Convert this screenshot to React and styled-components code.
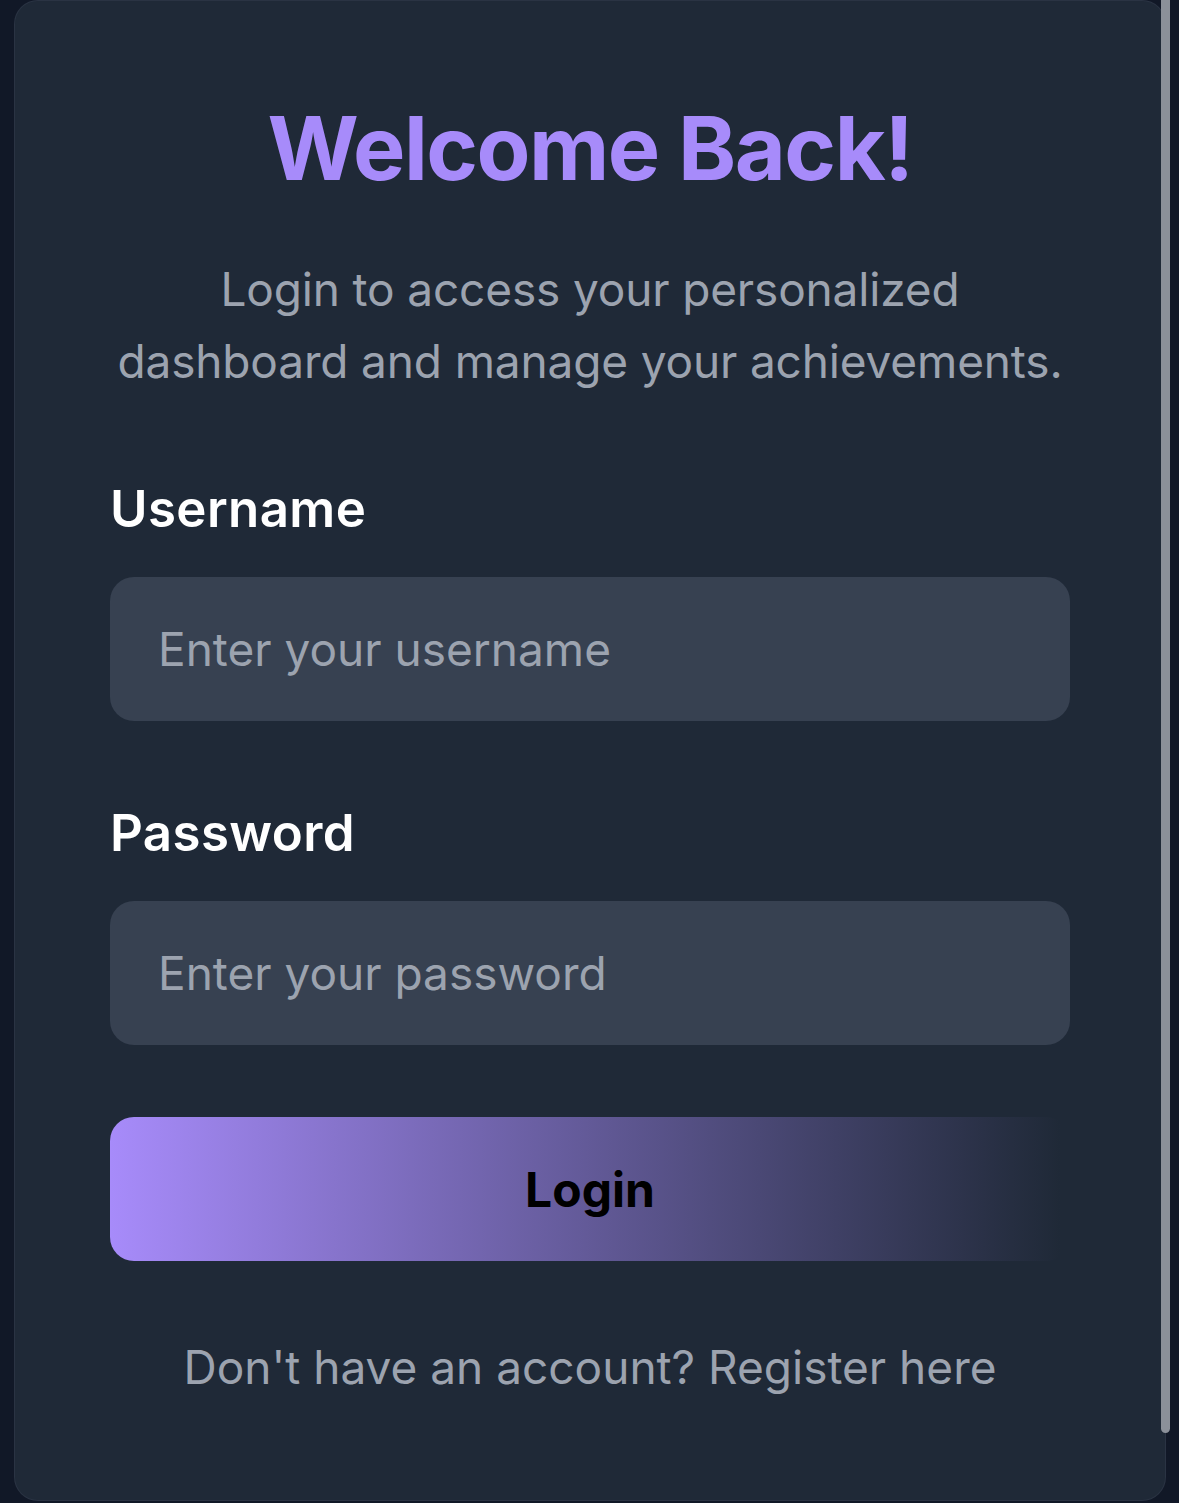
import React from "react";
import styled, { createGlobalStyle } from "styled-components";

const GlobalStyle = createGlobalStyle`
  html, body {
    margin: 0;
    padding: 0;
    background: #111827;
    overflow: hidden;
  }
  * {
    box-sizing: border-box;
  }
`;

const Page = styled.div`
  font-family: Inter, "Noto Sans", "Liberation Sans", sans-serif;
  padding-left: 14px;
  width: 1179px;
  height: 1503px;
`;

const Card = styled.div`
  width: 1152px;
  height: 1501px;
  background: #1f2937;
  border: 1px solid rgba(55, 65, 81, 0.45);
  border-radius: 24px;
  padding: 99px 95px 0;
  display: flex;
  flex-direction: column;
`;

const Title = styled.h1`
  margin: 0;
  font-size: 88px;
  line-height: 97px;
  font-weight: 700;
  color: #a78bfa;
  text-align: center;
  letter-spacing: -1.5px;
`;

const Subtitle = styled.p`
  margin: 56px 0 0;
  font-size: 46px;
  line-height: 72px;
  color: #9ca3af;
  text-align: center;
  white-space: nowrap;
  letter-spacing: -0.15px;
`;

const Form = styled.form`
  margin-top: 76px;
  display: flex;
  flex-direction: column;
`;

const Field = styled.div`
  display: flex;
  flex-direction: column;
  gap: 32px;
  margin-bottom: ${props => (props.last ? "72px" : "76px")};
`;

const Label = styled.label`
  font-size: 51px;
  line-height: 72px;
  font-weight: 600;
  color: #ffffff;
  letter-spacing: 0.4px;
`;

const Input = styled.input`
  height: 144px;
  width: 100%;
  border: none;
  outline: none;
  border-radius: 24px;
  background: #374151;
  padding: 0 48px;
  font-family: inherit;
  font-size: 46px;
  color: #f3f4f6;

  &::placeholder {
    color: #9ca3af;
  }
`;

const Button = styled.button`
  height: 144px;
  width: 100%;
  border: none;
  border-radius: 24px;
  background: linear-gradient(to right, #a78bfa 0%, #1f2937 99%);
  font-family: inherit;
  font-size: 48px;
  font-weight: 700;
  color: #000000;
  cursor: pointer;
`;

const Footer = styled.p`
  margin: 72px 0 0;
  font-size: 46px;
  line-height: 68px;
  color: #9ca3af;
  text-align: center;
`;

const ScrollThumb = styled.div`
  position: fixed;
  top: 0;
  right: 9px;
  width: 9px;
  height: 1433px;
  border-radius: 0 0 5px 5px;
  background: #8b9099;
`;

export default function App() {
  return (
    <Page>
      <GlobalStyle />
      <Card>
        <Title>Welcome Back!</Title>
        <Subtitle>
          Login to access your personalized
          <br />
          dashboard and manage your achievements.
        </Subtitle>
        <Form onSubmit={e => e.preventDefault()}>
          <Field>
            <Label htmlFor="username">Username</Label>
            <Input id="username" type="text" placeholder="Enter your username" />
          </Field>
          <Field last>
            <Label htmlFor="password">Password</Label>
            <Input id="password" type="password" placeholder="Enter your password" />
          </Field>
          <Button type="submit">Login</Button>
        </Form>
        <Footer>Don't have an account? Register here</Footer>
      </Card>
      <ScrollThumb />
    </Page>
  );
}
